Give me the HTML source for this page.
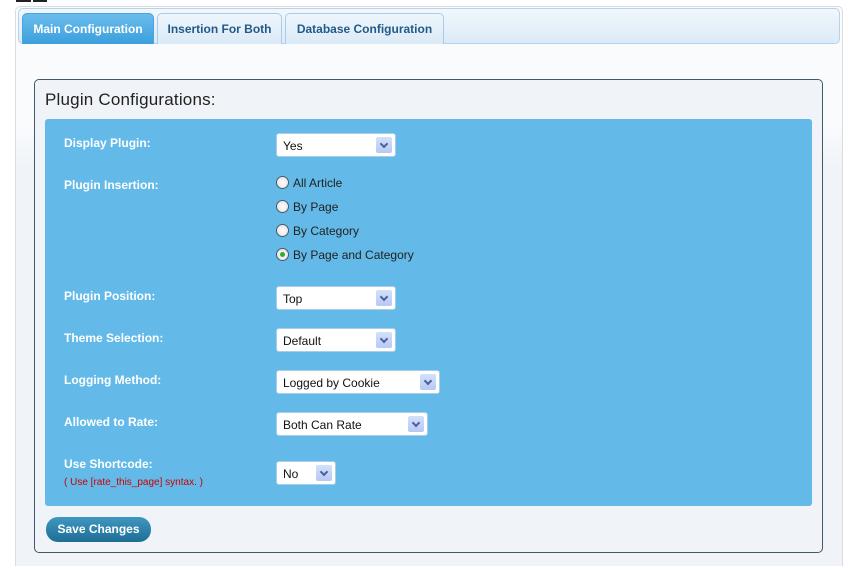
<!DOCTYPE html>
<html style="overflow:hidden"><head><style>
*{box-sizing:border-box}
html,body{margin:0;width:851px;height:566px;overflow:hidden}
body{background:#fff;font-family:"Liberation Sans",sans-serif;position:relative}
.a{position:absolute}
.outer{left:15px;top:6px;width:828px;height:560px;border:1px solid #dcdcdc;border-bottom:none;border-radius:5px 5px 0 0;background:linear-gradient(#f9fbfd 0,#f9fbfd 120px,#f0f4f8 160px)}
.bar{left:18px;top:8px;width:822px;height:36px;border:1px solid #b5d3ec;border-radius:5px;background:linear-gradient(#f1f7fc,#dceaf7)}
.tab{top:13px;height:31px;border:1px solid #aacbe6;border-bottom:none;border-radius:5px 5px 0 0;background:linear-gradient(#eef6fc,#dbeaf7);color:#235a88;font-weight:bold;font-size:12px;text-align:center;line-height:30px}
.tab.on{background:linear-gradient(#6bbcec,#3b9fdc);color:#fff;border-color:#4aa3dc}
.box{left:34px;top:79px;width:789px;height:474px;border:1px solid #405a6a;border-radius:5px;background:#f0f4f8}
.title{left:45px;top:90px;font-size:17px;color:#222;letter-spacing:0.2px}
.panel{left:45px;top:119px;width:767px;height:387px;background:#63bae8;border-radius:3px}
.lbl{left:64px;color:#fff;font-weight:bold;font-size:12px}
.sel{left:276px;height:24px;background:#fff;border:1px solid #a9cde8;border-radius:3px;font-size:12px;color:#111;padding:5px 0 0 6px}
.sel i{position:absolute;right:3px;top:3px;width:16px;height:16px;background:linear-gradient(#d4e0fb,#b7c9f4);border-radius:2px}
.sel i:after{content:"";position:absolute;left:5px;top:4px;width:4px;height:4px;border-right:2px solid #4a5f9a;border-bottom:2px solid #4a5f9a;transform:rotate(45deg)}
.r{left:276px;font-size:12px;color:#222}
.r b{display:inline-block;width:13px;height:13px;border:1px solid #4a5a6a;border-radius:50%;background:radial-gradient(#fff,#ddd);vertical-align:-2px;margin-right:4px;position:relative}
.r b.c:after{content:"";position:absolute;left:3px;top:3px;width:5px;height:5px;border-radius:50%;background:#3a3}
.btn{left:46px;top:517px;width:105px;height:25px;border-radius:12px;background:linear-gradient(#3f97c0,#1f6e96);color:#fff;font-weight:bold;font-size:12px;text-align:center;line-height:25px}
</style></head><body>
<div class="a" style="left:16px;top:0;width:15px;height:2px;background:#222"></div>
<div class="a" style="left:33px;top:0;width:14px;height:2px;background:#222"></div>
<div class="a outer"></div>
<div class="a bar"></div>
<div class="a tab on" style="left:22px;width:132px">Main Configuration</div>
<div class="a tab" style="left:157px;width:125px">Insertion For Both</div>
<div class="a tab" style="left:285px;width:159px">Database Configuration</div>
<div class="a box"></div>
<div class="a title">Plugin Configurations:</div>
<div class="a panel"></div>
<div class="a lbl" style="top:136px">Display Plugin:</div>
<div class="a sel" style="top:133px;width:120px">Yes<i></i></div>
<div class="a lbl" style="top:178px">Plugin Insertion:</div>
<div class="a r" style="top:176px"><b></b>All Article</div>
<div class="a r" style="top:200px"><b></b>By Page</div>
<div class="a r" style="top:224px"><b></b>By Category</div>
<div class="a r" style="top:248px"><b class="c"></b>By Page and Category</div>
<div class="a lbl" style="top:289px">Plugin Position:</div>
<div class="a sel" style="top:286px;width:120px">Top<i></i></div>
<div class="a lbl" style="top:331px">Theme Selection:</div>
<div class="a sel" style="top:328px;width:120px">Default<i></i></div>
<div class="a lbl" style="top:373px">Logging Method:</div>
<div class="a sel" style="top:370px;width:164px">Logged by Cookie<i></i></div>
<div class="a lbl" style="top:415px">Allowed to Rate:</div>
<div class="a sel" style="top:412px;width:152px">Both Can Rate<i></i></div>
<div class="a lbl" style="top:457px">Use Shortcode:</div>
<div class="a" style="left:64px;top:477px;font-size:10px;color:#c00">( Use [rate_this_page] syntax. )</div>
<div class="a sel" style="top:461px;width:60px">No<i></i></div>
<div class="a btn">Save Changes</div>
</body></html>
